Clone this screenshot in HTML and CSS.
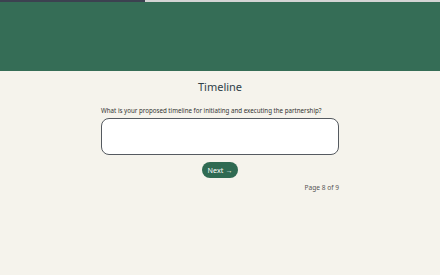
FILE: index.html
```html
<!DOCTYPE html>
<html lang="en">
<head>
  <meta charset="UTF-8" />
  <title>Timeline</title>
  <link rel="stylesheet" href="styles.css">
</head>
<body>
  <div class="progress"><div class="progress-fill"></div></div>
  <header class="hero"></header>
  <main class="form">
    <h1>Timeline</h1>
    <label for="answer">What is your proposed timeline for initiating and executing the partnership?</label>
    <textarea id="answer"></textarea>
    <div class="actions"><button class="next">Next &rarr;</button></div>
    <div class="page">Page 8 of 9</div>
  </main>
</body>
</html>
```

FILE: styles.css
```css
* {
  box-sizing: border-box;
  font-family: "Noto Sans", sans-serif;
}
body {
  margin: 0;
  background: #f5f3ec;
  color: #2f3b45;
}
.progress {
  height: 2px;
  background: #d4d4d4;
}
.progress-fill {
  width: 145px;
  height: 100%;
  background: #3c4150;
}
.hero {
  height: 69px;
  background: #356d56;
}
.form {
  width: 238px;
  margin: 0 auto;
  display: flex;
  flex-direction: column;
}
h1 {
  margin: 8px 0 0;
  text-align: center;
  font-size: 11px;
  font-weight: 400;
  line-height: 16px;
  color: #2f3f48;
}
label {
  margin-top: 11px;
  font-size: 6.2px;
  line-height: 10px;
  color: #333;
}
textarea {
  margin-top: 2px;
  height: 37px;
  border: 1.3px solid #555a60;
  border-radius: 8px;
  background: #fff;
  resize: none;
}
.actions {
  display: flex;
  justify-content: center;
  margin-top: 7px;
}
.next {
  height: 16px;
  padding: 0 6px;
  border: none;
  border-radius: 8px;
  background: #2f6a52;
  color: #fff;
  font-size: 7.2px;
}
.page {
  margin-top: 5px;
  text-align: right;
  font-size: 6.6px;
  line-height: 10px;
  color: #555;
}
```
